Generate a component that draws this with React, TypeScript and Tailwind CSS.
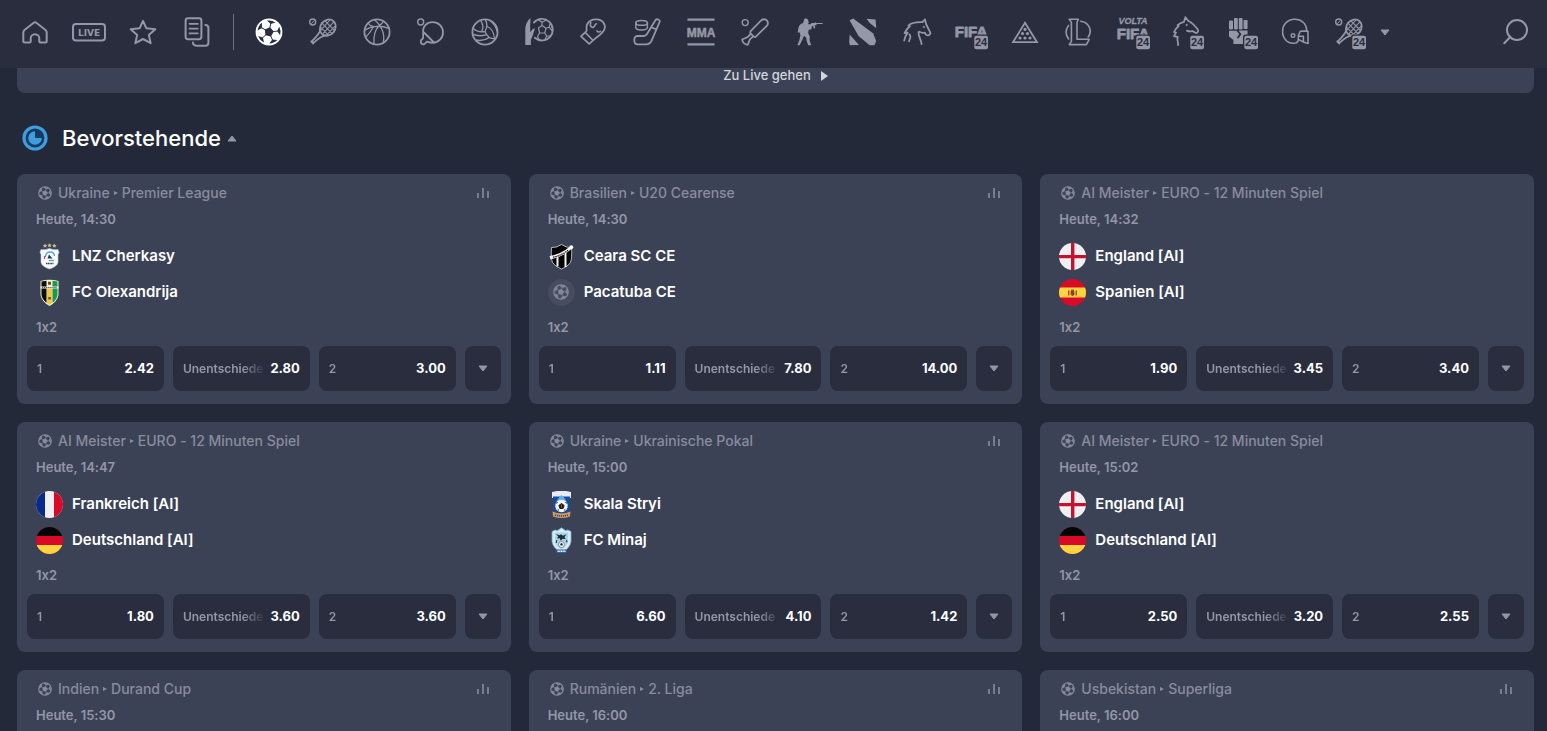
import type { ReactNode } from 'react'

const LOGO_FONT = "'Liberation Sans', Arial, sans-serif"

function Icon({ children }: { children: ReactNode }) {
  return (
    <svg viewBox="0 0 36 36" className="h-9 w-9" fill="none" stroke="currentColor" strokeWidth="1.8" strokeLinecap="round" strokeLinejoin="round" aria-hidden="true">
      {children}
    </svg>
  )
}

/* Small "24" plate used by the simulated sports */
function Badge24() {
  return (
    <g stroke="none">
      <rect x="20" y="20.5" width="16" height="15.5" rx="2.5" fill="#292d3d" />
      <rect x="21.3" y="21.7" width="13.7" height="13.5" rx="2" fill="currentColor" />
      <text x="28.1" y="32.4" textAnchor="middle" fontSize="11" fontWeight="700" fontFamily={LOGO_FONT} fill="#292d3d">24</text>
    </g>
  )
}

function BallPatches() {
  return (
    <>
      <path d="M18 13.2 22.6 16.5 20.8 21.9H15.2L13.4 16.5Z" />
      {[0, 72, 144, 216, 288].map((angle) => (
        <path key={angle} transform={`rotate(${angle} 18 18)`} d="M13.6 7.3Q18 5.6 22.4 7.3L18 9.8Z" />
      ))}
    </>
  )
}

function BallSeams() {
  return (
    <>
      {[0, 72, 144, 216, 288].map((angle) => (
        <path key={angle} transform={`rotate(${angle} 18 18)`} d="M18 13.4V9.5" />
      ))}
    </>
  )
}

function SmallBall({ className }: { className: string }) {
  return (
    <svg viewBox="4 4 28 28" className={className} fill="none" stroke="currentColor" aria-hidden="true">
      <circle cx="18" cy="18" r="12.6" strokeWidth="2.2" />
      <g transform="rotate(14 18 18)">
        <g strokeWidth="1"><BallSeams /></g>
        <g fill="currentColor" strokeWidth="1.4"><BallPatches /></g>
      </g>
    </svg>
  )
}

function Racket() {
  return (
    <>
      <circle cx="7.7" cy="8" r="3" strokeWidth="1.4" />
      <path d="M6.6 9.5 9 6.6" strokeWidth="1" />
      <ellipse cx="22.8" cy="13.6" rx="7.4" ry="8.6" transform="rotate(40 22.8 13.6)" />
      <path d="M20 6.9 29 16M17 9.2l9.6 9.9M15.3 12.8l8 8.3M25 6l-8.8 9.6M28.6 8.2 18.2 19.3M30 12.2l-8.4 9" strokeWidth="1.1" />
      <path d="M15.5 15.8C14.6 19.4 11.8 22.5 7 27.2l1.6 1.7C13 24.6 17 21.7 20.8 21.3M6.2 27.4l2 2.2" />
    </>
  )
}

function FootballIcon() {
  return (
    <Icon>
      <circle cx="18" cy="18" r="13.4" fill="currentColor" stroke="none" />
      <g fill="#292d3d" stroke="none" transform="rotate(12 18 18)"><BallPatches /></g>
      <g stroke="#292d3d" strokeWidth="0.9" transform="rotate(12 18 18)"><BallSeams /></g>
    </Icon>
  )
}

const menuIcons: { label: string; icon: ReactNode }[] = [
  {
    label: 'Startseite',
    icon: <Icon><path strokeWidth="2" d="M7.5 16 16.7 8.8Q18 7.8 19.3 8.8L28.5 16Q29.7 17 29.7 18.5V27Q29.7 28.5 28.2 28.5H23.3Q22.3 28.5 22.3 27.5V24.5A4.3 4.3 0 0 0 13.7 24.5V27.5Q13.7 28.5 12.7 28.5H7.8Q6.3 28.5 6.3 27V18.5Q6.3 17 7.5 16Z" /></Icon>,
  },
  {
    label: 'Live',
    icon: (
      <Icon>
        <rect x="2" y="10" width="32" height="16.5" rx="3" strokeWidth="2" />
        <text x="18" y="21.6" textAnchor="middle" fontSize="9" fontWeight="700" fontFamily="'DejaVu Sans', sans-serif" fill="currentColor" stroke="none">LIVE</text>
      </Icon>
    ),
  },
  {
    label: 'Favoriten',
    icon: <Icon><path strokeWidth="2" d="M18 6.8 21.4 14.3 30.3 15.2 23.8 20.9 25.7 29.2 18 25 10.3 29.2 12.2 20.9 5.7 15.2 14.6 14.3Z" /></Icon>,
  },
  {
    label: 'Wettscheine',
    icon: (
      <Icon>
        <path strokeWidth="2" d="M9 4.3H20Q22.4 4.3 22.4 6.7V22.8Q22.4 25.2 20 25.2H9Q6.6 25.2 6.6 22.8V6.7Q6.6 4.3 9 4.3ZM26.4 11Q29.4 11 29.4 14V28.7Q29.4 31.7 26.4 31.7H17.2Q14 31.7 14 28.6" />
        <path strokeWidth="1.8" d="M10.5 9.8H18.8M10.5 14.6H18.8M10.5 19.4H18.8" />
      </Icon>
    ),
  },
]

const sportIcons: { label: string; icon: ReactNode }[] = [
  { label: 'Fußball', icon: <FootballIcon /> },
  { label: 'Tennis', icon: <Icon><Racket /></Icon> },
  {
    label: 'Basketball',
    icon: (
      <Icon>
        <circle cx="18" cy="18" r="12.6" />
        <path strokeWidth="1.3" d="M5.8 16.5C12 11.5 22 11 30.2 14.6M9 9C11 12.5 16 13.5 20 11.8C22.5 10.5 23.8 8.5 24.4 7.2M15.2 5.8C19 8.5 21.5 12 23.4 16.5C25 20.5 25 25 24.4 28.6M20 11.8C16 16 14.5 23 15 30M6.6 23.4C10.5 19.5 13.5 14.5 14.5 12.9" />
      </Icon>
    ),
  },
  {
    label: 'Tischtennis',
    icon: (
      <Icon>
        <circle cx="7.7" cy="8" r="3" strokeWidth="1.4" />
        <path d="M10.2 18.4C9.4 11.8 14.2 8.2 19.8 8.2C25.6 8.2 30 12.8 30 18.4C30 24 25.4 28.8 19.8 28.8C17 28.8 15.5 28.2 14 27.6C13 27.8 12.8 29.8 11 30.3C8.7 30.8 7.2 28.6 8 26.6C8.8 25 10.6 25 10.2 22.6C9.9 21.2 10.3 20 10.2 18.4ZM11 18.5 21 28.5" />
      </Icon>
    ),
  },
  {
    label: 'Volleyball',
    icon: (
      <Icon>
        <circle cx="18" cy="18" r="12.6" />
        <path strokeWidth="1.3" d="M18 17.5C13.2 18.3 9 17.2 6 14.2M18 17.5C20.5 13 20.5 9 18 5.4M18 17.5C20 22.5 24 25.2 28.6 24.9M14.4 17.8C17 13.5 16.2 10 13.5 6.4M20.2 12.5C24 13.8 27 17.5 27.5 25M22.8 6.5C26.5 9 29 13 30.3 18M19.6 20.6C14 22.4 9.5 22 5.8 20.2M22.4 23.4C18 26.5 13 27 8.5 26" />
      </Icon>
    ),
  },
  {
    label: 'Handball',
    icon: (
      <Icon>
        <path fill="currentColor" stroke="none" d="M4.3 31V15.5C4.3 11 6.4 6.5 9.2 4.2C9.9 5.2 9.2 9 9.2 12V18.2C10.4 16.6 11.5 14.9 13 14.4C14 14.2 13.8 15.2 13.3 16.5C12.3 19.6 11.7 22.3 10.4 24.5C9.7 25.7 9.9 28 9.9 31Z" />
        <path d="M12.8 8.6A10.8 10.8 0 1 1 13.8 23.8" />
        <path strokeWidth="1.2" d="M17.5 14 21 11.5 25 14.3 23.7 19H18.6ZM21 11.5V8.3L17.6 6M21 8.3 25 6.2M25 14.3 28.2 13.2 29 9.8M28.2 13.2 31 16.5M23.7 19 25.7 22 29.6 22M25.7 22 23.8 26M18.6 19 16.6 22.3 18.2 26" />
      </Icon>
    ),
  },
  {
    label: 'Boxen',
    icon: (
      <Icon>
        <path d="M6 22.3 11.2 17.4C12.4 16.2 10.6 13.8 12 10.6C13.6 7 18 5.2 22 5.4C27.5 5.8 30.8 10.2 29.6 14.8C28.4 19 24 21.8 20.4 24.3L14.2 29.8Z" />
        <path d="M15.8 8.2C14.6 11.8 16 13.6 18 13.4C20 13 19.4 10.2 21.4 9.8M10.4 18.6 17.6 26M22 16.8C22.6 18 24 18.4 25.5 17.4" strokeWidth="1.6" />
      </Icon>
    ),
  },
  {
    label: 'Eishockey',
    icon: (
      <Icon>
        <ellipse cx="12.6" cy="8.9" rx="5.8" ry="2.4" strokeWidth="1.5" />
        <path strokeWidth="1.5" d="M6.8 9V13.5C6.8 16.8 18.4 16.8 18.4 13.5V9" />
        <path d="M26.4 6.2C27.6 4.2 31.5 5.8 30.6 8L22.6 26.6C21.6 29 20 30.3 17 30.3H8.4C4.4 30.3 4.2 22 8.2 22H14.6C16.2 22 17.2 21.4 18 20ZM22.6 13.5 27.6 15.4" />
      </Icon>
    ),
  },
  {
    label: 'MMA',
    icon: (
      <Icon>
        <path strokeLinecap="butt" strokeWidth="2.2" d="M4.5 5.6H31.5M4.5 30.4H31.5" />
        <text x="18" y="22.6" textAnchor="middle" fontSize="12" fontWeight="700" fontFamily={LOGO_FONT} fill="currentColor" strokeWidth="0.5">MMA</text>
      </Icon>
    ),
  },
  {
    label: 'Cricket',
    icon: (
      <Icon>
        <circle cx="8.2" cy="8.6" r="3" strokeWidth="1.4" />
        <path d="M13.6 19.4C12.8 18.6 13.4 17.4 14.2 16.6L24.4 6.2C25.8 4.8 28.5 5 29.8 6.4C31.3 8 31.3 10.4 29.8 11.8L19.4 22.2C18.4 23.2 17.6 23.6 16.6 22.6ZM13.8 19.6 11.4 22.4C9.8 24 7.2 24.4 5.2 25.4C5.4 28.4 7.8 30.6 10.6 30.8C12 28.8 11.6 26.6 13.6 24.6L16.4 22.4" />
      </Icon>
    ),
  },
  {
    label: 'Counter-Strike',
    icon: (
      <Icon>
        <path fill="currentColor" stroke="none" d="M13.4 4.8C15 4.2 17 4.8 17.2 6.4L17.8 8.4 16.8 10.2H19.6L20.6 9H24.2V8.2H25V9H31.8V10H25.5V11.2H23.6L24.4 14.2H22.8L22 12 20.6 12.6V15.2L17.6 15.8 17.2 19.2 18.8 22.4 18.6 26.2 20 30.4V31.3H17.2L15.6 26.8 15.2 23.8 13 21.8 11 26.4 8.6 31.3H6.4L6.8 30 8.2 26.4 9.4 21.4 8.8 18.6 6.6 18.4 7.6 13.2C8.2 10.8 10 9.4 12 9.2Z" />
      </Icon>
    ),
  },
  {
    label: 'Dota 2',
    icon: (
      <Icon>
        <g fill="currentColor" stroke="none">
          <path d="M4.6 6.2 8.2 4.6 28 19.2 31.2 27 29.4 31.3H24.6L13.5 22Z" />
          <path d="M21.6 4.8 30.6 5.6 31.2 14.2 24.4 8.8Z" />
          <path d="M4.6 20.6 14 31 5 31.3 4.2 29Z" />
        </g>
      </Icon>
    ),
  },
  {
    label: 'Pferderennen',
    icon: (
      <Icon>
        <path d="M5.2 26.6C5.8 23 7 20.8 8.6 18.6L5.6 19.2C7 15.6 9.2 13.6 11 12L9.4 11.6C12.6 8.4 17.8 8 23.4 8.2L26 5.4 27 10 31.2 18.4C32 20.6 29 22.4 27 20.6L25.6 18.6C23.6 19.2 22 18.8 20.4 17.6M19.6 18.2C19 22 22 25 22.6 30.2M10.4 20.4C12.6 22 11 24.4 10 27.2" />
        <circle cx="24.8" cy="13" r="0.7" fill="currentColor" strokeWidth="0.6" />
      </Icon>
    ),
  },
  {
    label: 'FIFA 24',
    icon: (
      <Icon>
        <text x="18" y="22.6" textAnchor="middle" fontSize="15" fontWeight="700" fontFamily={LOGO_FONT} fill="currentColor" strokeWidth="0.8">FIFA</text>
        <Badge24 />
      </Icon>
    ),
  },
  {
    label: 'Billard',
    icon: (
      <Icon>
        <path strokeLinejoin="miter" d="M18 8.8 30 28.2H6Z" />
        <g fill="currentColor" stroke="none">
          <circle cx="18" cy="15.4" r="1.6" />
          <circle cx="15.5" cy="19.6" r="1.6" />
          <circle cx="20.5" cy="19.6" r="1.6" />
          <circle cx="13" cy="24" r="1.6" />
          <circle cx="18" cy="24" r="1.6" />
          <circle cx="23" cy="24" r="1.6" />
        </g>
      </Icon>
    ),
  },
  {
    label: 'League of Legends',
    icon: (
      <Icon>
        <path strokeWidth="1.6" d="M8.2 5.3H17.4L16 8V25.3H28.2L25.4 30.6H8.2L10.4 27.4V8.4Z" />
        <path strokeWidth="1.6" d="M19.6 7.2C28.4 8.2 31.6 17 27.2 23M7.6 11.4C4.4 15.5 4.4 20.5 7.6 25" />
      </Icon>
    ),
  },
  {
    label: 'Volta FIFA 24',
    icon: (
      <Icon>
        <text x="18" y="10.4" textAnchor="middle" fontSize="9" fontWeight="700" fontStyle="italic" fontFamily={LOGO_FONT} fill="currentColor" strokeWidth="0.3">VOLTA</text>
        <text x="18" y="24.6" textAnchor="middle" fontSize="15" fontWeight="700" fontFamily={LOGO_FONT} fill="currentColor" strokeWidth="0.8">FIFA</text>
        <Badge24 />
      </Icon>
    ),
  },
  {
    label: 'Pferderennen 24',
    icon: (
      <Icon>
        <path d="M9 31.2C9.6 28 7.4 26.4 8.8 23L5 22.2 7 18.6 5 18C6.2 15 8 13.4 9.6 12L8.6 11.2C10.4 9.4 12.6 8.4 15 7.8L16.4 3.2 19.4 7C23 8.4 25.8 11.4 28.8 15.6C30 17.4 28 19.8 26.2 18.6L23.4 17C21.4 17.8 19.8 17.6 18 16.6" />
        <circle cx="17.6" cy="11" r="0.7" fill="currentColor" strokeWidth="0.6" />
        <Badge24 />
      </Icon>
    ),
  },
  {
    label: 'Kampf 24',
    icon: (
      <Icon>
        <g fill="currentColor" stroke="none">
          <rect x="6" y="6.4" width="4" height="9" rx="0.8" />
          <rect x="11" y="4" width="3.8" height="11.4" rx="0.8" />
          <rect x="15.8" y="4" width="3.8" height="11.4" rx="0.8" />
          <rect x="20.6" y="6" width="4" height="9" rx="0.8" />
          <path d="M6 16.8H13.4L16.2 20 13.8 24 15.4 24.6 18.4 20.2 15.6 16.6H24.6V22L21.6 25.4V30H10.4V26L6 22.4Z" />
        </g>
        <Badge24 />
      </Icon>
    ),
  },
  {
    label: 'American Football',
    icon: (
      <Icon>
        <path strokeWidth="1.6" d="M29.8 16.8C29.4 9.6 24.4 5 17.6 5.2C10.4 5.4 5.2 11 5.6 18C5.7 22 7.6 25 9.6 27C12 29 16 29.6 18.8 29C20.8 28.5 21.4 26.5 21.4 24.5V21.5L23.4 17.2ZM21.4 22.2H26.4V28M23.4 17.2H31V29.4L26.4 28L21.4 25.4" />
        <circle cx="16" cy="21.6" r="1.8" strokeWidth="1.4" />
      </Icon>
    ),
  },
  { label: 'Tennis 24', icon: <Icon><Racket /><Badge24 /></Icon> },
]

/* ---------- team crests ---------- */

function Flag({ children }: { children: ReactNode }) {
  return (
    <span className="block h-[27px] w-[27px] overflow-hidden rounded-full">
      <svg viewBox="0 0 27 27" className="h-full w-full" aria-hidden="true">{children}</svg>
    </span>
  )
}

function Crest({ children }: { children: ReactNode }) {
  return <svg viewBox="0 0 27 27" className="h-[27px] w-[27px]" aria-hidden="true">{children}</svg>
}

const england = (
  <Flag>
    <rect width="27" height="27" fill="#f0f0f2" />
    <path d="M12 0h3.4v27H12zM0 12h27v3.2H0z" fill="#c8102e" />
  </Flag>
)

const spain = (
  <Flag>
    <rect width="27" height="27" fill="#d80a27" />
    <rect y="8.5" width="27" height="10" fill="#ffd43f" />
    <path d="M9 11.5h1.4v5H9zM16.6 11.5H18v5h-1.4zM11.5 12.2l1-1.7h2l1 1.7v3.6l-2 1.4-2-1.4z" fill="#a5502d" />
    <path d="M12.5 12.4h1v1.6h-1zM13.6 14h1.2v1.4h-1.2z" fill="#4c2c24" />
  </Flag>
)

const france = (
  <Flag>
    <rect width="27" height="27" fill="#f0f0f2" />
    <rect width="9" height="27" fill="#062b8c" />
    <rect x="18" width="9" height="27" fill="#d80a27" />
  </Flag>
)

const germany = (
  <Flag>
    <rect width="27" height="27" fill="#d80a27" />
    <rect width="27" height="9" fill="#050505" />
    <rect y="18" width="27" height="9" fill="#ffd43f" />
  </Flag>
)

const cherkasy = (
  <Crest>
    <path d="M9 .6l.8 1.4 1.5.1-1.1 1 .3 1.5L9 3.9l-1.4.7.3-1.5-1.1-1L8.2 2zM13.5.2l.8 1.4 1.5.1-1.1 1 .3 1.5-1.5-.7-1.4.7.3-1.5-1.1-1 1.4-.1zM18.3.6l.8 1.4 1.5.1-1.1 1 .3 1.5-1.5-.7-1.4.7.3-1.5-1.1-1 1.4-.1z" fill="#c9bd96" />
    <path d="M5 6.5q4 .8 8.5-1 4.5 1.8 8.5 1l1 3-1 2v8q-1 4-8.5 6.5Q6 23.5 5 19.5v-8l-1-2z" fill="#f7f9fc" stroke="#b8c6d8" strokeWidth=".6" />
    <path d="M9.5 14q0-5 5-5 3.5 0 4 4" fill="none" stroke="#5aa7dc" strokeWidth="1.4" />
    <path d="M8.5 13v3" stroke="#d83a6a" strokeWidth="1.2" />
    <path d="M11.5 15.5l1.5-4 3.5 4z" fill="#173a63" />
    <path d="M13 17.5h5" stroke="#4caf6f" strokeWidth="1.2" />
    <path d="M10 20.5h7.5" stroke="#40444c" strokeWidth="1.6" strokeDasharray="1.3 .4" />
  </Crest>
)

const olexandrija = (
  <Crest>
    <path d="M4.5 2q9-2.5 18 0v14q-1 6.5-9 11-8-4.5-9-11z" fill="#f3efd2" />
    <path d="M5.5 2.6l5-.8v22q-4.5-3.3-5-8z" fill="#0c0d0d" />
    <path d="M16.5 1.8l5 .8v13.2q-.5 4.7-5 8z" fill="#169a4c" />
    <path d="M11 9h5v15l-2.5 2L11 24z" fill="#f2c744" />
    <path d="M4.5 7.5h18v2h-18z" fill="#e9ebe6" />
    <path d="M6 8.5h15" stroke="#33372f" strokeWidth=".8" strokeDasharray="1.2 .7" />
    <path d="M12 2.8h3v3h-3zM12.3 18h2.5v2.5h-2.5z" fill="#6b4b1d" />
  </Crest>
)

const ceara = (
  <Crest>
    <path d="M3.5 4.5q5 .5 10-3 5 3.5 10 3 .8 10-1 15-2.500 4-9 6.500-6.500-2.500-9-6.500-1.800-5-1-15z" fill="#050506" stroke="#d8d9dd" strokeWidth=".8" />
    <path d="M9.5 13.5v10M17.5 10v14" stroke="#f4f4f4" strokeWidth="2" />
    <path d="M1.5 13q12-2 21-10l1.5 2.5Q15 14 2.5 16.5z" fill="#f4f4f4" />
    <path d="M5 14.2q9-1.7 15-7" fill="none" stroke="#111" strokeWidth="1.2" strokeDasharray="1.5 .7" />
    <circle cx="23.3" cy="4.2" r="1.9" fill="#fff" />
  </Crest>
)

const skala = (
  <Crest>
    <path d="M4 1q9.5-2.5 19 0v6H4z" fill="#eceaf1" />
    <path d="M5 5.5h17v14q-8 5-17 0z" fill="#174c9c" />
    <path d="M13.5 4q5 4 5.5 10H8q.5-6 5.5-10z" fill="#57b2e5" />
    <circle cx="13.5" cy="15" r="6.2" fill="#f5f5f6" />
    <path d="M13.5 12.5l2.6 1.9-1 3.1h-3.2l-1-3.1zM8.5 12.5l1-1.5M18.5 12.5l-1-1.5M9.5 19h1.5M16 19h1.5" fill="#191d24" stroke="#191d24" strokeWidth="1" />
    <path d="M13 13.5h1v3h-1z" fill="#c0392b" />
    <path d="M4.5 20.5q9 4 18 0l-.5 5q-8.5 3-17 0z" fill="#c99b72" />
    <path d="M7 24q6.500 2 13 0" fill="none" stroke="#5b4333" strokeWidth="1.5" strokeDasharray="1.2 .8" />
  </Crest>
)

const minaj = (
  <Crest>
    <path d="M4 4.5l3-1.5 2.5.6L13.5.8l4 2.8L20 3l3 1.5v10q-1 7-9.5 11Q5 21.5 4 14.5z" fill="#d8ebf5" stroke="#6eacd2" strokeWidth=".8" />
    <path d="M7 5.5h13v9q-1 4.5-6.5 8Q8 19 7 14.5z" fill="#a9d3ea" />
    <path d="M8 7l3.5 1.2 1.5-1 1.8 1.6 3.7-1.5-2 2.7 1.2 2.2-3-.5-2 2-1-2.5-2.7.3 1.2-2z" fill="#222b33" />
    <path d="M9 13l-1 3M18.5 13l.5 2.5" stroke="#222b33" strokeWidth="1" />
    <circle cx="13.5" cy="17.5" r="3" fill="#f4f7f9" stroke="#4b5660" strokeWidth=".6" />
    <path d="M13.5 16l1.4 1-.5 1.6h-1.8l-.5-1.6z" fill="#222b33" />
    <path d="M8.5 22.5h10v3.5h-10z" fill="#2a64a6" />
    <path d="M9.5 24.3h8" stroke="#fff" strokeWidth="1.5" strokeDasharray="1.2 .5" />
  </Crest>
)

const noCrest = (
  <span className="flex h-[27px] w-[27px] items-center justify-center rounded-full bg-[#474c5e] text-[#82879a]">
    <SmallBall className="h-4 w-4" />
  </span>
)

/* ---------- matches ---------- */

type Match = {
  country: string
  league: string
  time: string
  stats?: boolean
  teams?: { name: string; crest: ReactNode }[]
  odds?: [string, string, string]
}

const matches: Match[] = [
  { country: 'Ukraine', league: 'Premier League', time: 'Heute, 14:30', stats: true, teams: [{ name: 'LNZ Cherkasy', crest: cherkasy }, { name: 'FC Olexandrija', crest: olexandrija }], odds: ['2.42', '2.80', '3.00'] },
  { country: 'Brasilien', league: 'U20 Cearense', time: 'Heute, 14:30', stats: true, teams: [{ name: 'Ceara SC CE', crest: ceara }, { name: 'Pacatuba CE', crest: noCrest }], odds: ['1.11', '7.80', '14.00'] },
  { country: 'AI Meister', league: 'EURO - 12 Minuten Spiel', time: 'Heute, 14:32', teams: [{ name: 'England [AI]', crest: england }, { name: 'Spanien [AI]', crest: spain }], odds: ['1.90', '3.45', '3.40'] },
  { country: 'AI Meister', league: 'EURO - 12 Minuten Spiel', time: 'Heute, 14:47', teams: [{ name: 'Frankreich [AI]', crest: france }, { name: 'Deutschland [AI]', crest: germany }], odds: ['1.80', '3.60', '3.60'] },
  { country: 'Ukraine', league: 'Ukrainische Pokal', time: 'Heute, 15:00', stats: true, teams: [{ name: 'Skala Stryi', crest: skala }, { name: 'FC Minaj', crest: minaj }], odds: ['6.60', '4.10', '1.42'] },
  { country: 'AI Meister', league: 'EURO - 12 Minuten Spiel', time: 'Heute, 15:02', teams: [{ name: 'England [AI]', crest: england }, { name: 'Deutschland [AI]', crest: germany }], odds: ['2.50', '3.20', '2.55'] },
  { country: 'Indien', league: 'Durand Cup', time: 'Heute, 15:30', stats: true },
  { country: 'Rumänien', league: '2. Liga', time: 'Heute, 16:00', stats: true },
  { country: 'Usbekistan', league: 'Superliga', time: 'Heute, 16:00', stats: true },
]

const outcomes = ['1', 'Unentschiede', '2']

function Caret({ className }: { className: string }) {
  return (
    <svg viewBox="0 0 10 7" className={className} fill="currentColor" stroke="currentColor" strokeLinejoin="round" aria-hidden="true">
      <path d="M1 1h8L5 6z" />
    </svg>
  )
}

function MatchCard({ match }: { match: Match }) {
  return (
    <article className="min-h-[230px] rounded-lg bg-[#3c4256] px-[10px] pt-[5px] pb-[13px]">
      <div className="flex h-[27px] items-center px-[11px] text-sm font-medium text-[#888c9d]">
        <SmallBall className="mr-[6px] h-[14px] w-[14px]" />
        <span>{match.country}</span>
        <svg viewBox="0 0 4 4" className="mx-1 h-1 w-1" fill="currentColor" aria-hidden="true"><path d="M0 0l4 2-4 2z" /></svg>
        <span>{match.league}</span>
        {match.stats && (
          <button aria-label="Statistik" className="ml-auto text-[#777c8e]">
            <svg viewBox="0 0 14 12" className="h-3 w-[14px]" stroke="currentColor" strokeWidth="2" aria-hidden="true">
              <path d="M2 6v5M7 1v10M12 4v7" />
            </svg>
          </button>
        )}
      </div>
      <div className="flex h-[27px] items-center px-[9px] text-[13px] font-semibold text-[#9296a6]">{match.time}</div>

      {match.teams && (
        <div className="mt-[5px] px-[9px]">
          {match.teams.map((team) => (
            <div key={team.name} className="flex h-9 items-center gap-[9px] text-[15px] font-semibold text-white">
              {team.crest}
              <span>{team.name}</span>
            </div>
          ))}
        </div>
      )}

      {match.odds && (
        <>
          <div className="flex h-9 items-center px-[9px] text-[13px] font-semibold text-[#9296a6]">1x2</div>
          <div className="flex gap-[9px]">
            {match.odds.map((odd, i) => (
              <button key={outcomes[i]} className="flex h-[45px] min-w-0 flex-1 items-center gap-1 rounded-lg bg-[#292d3d] px-[10px] text-[13px]">
                <span className="min-w-0 flex-1 overflow-hidden text-left text-xs font-semibold whitespace-nowrap text-[#9296a6] [mask-image:linear-gradient(to_right,black_calc(100%_-_24px),transparent)]">
                  {outcomes[i]}
                </span>
                <span className="font-bold text-white">{odd}</span>
              </button>
            ))}
            <button aria-label="Weitere Wetten" className="flex h-[45px] w-9 items-center justify-center rounded-lg bg-[#292d3d] text-[#9296a6]">
              <Caret className="h-[7px] w-[10px]" />
            </button>
          </div>
        </>
      )}
    </article>
  )
}

export default function App() {
  return (
    <div className="flex h-screen flex-col overflow-hidden bg-[#232938] font-['Inter','Open_Sans',sans-serif] [font-feature-settings:'calt'_0]">
      {/* Sport navigation */}
      <header className="flex h-[68px] shrink-0 items-center bg-[#292d3d] pr-[5px] pb-1 pl-2 text-[#9497a5]">
        <nav aria-label="Hauptmenü" className="flex">
          {menuIcons.map((item) => (
            <button key={item.label} aria-label={item.label} className="flex w-[54px] justify-center">{item.icon}</button>
          ))}
        </nav>
        <div className="mr-2 ml-[9px] h-9 w-px bg-[#6d7180]" />
        <nav aria-label="Sportarten" className="flex items-center">
          {sportIcons.map((item, i) => (
            <button key={item.label} aria-label={item.label} className={i === 0 ? 'flex w-[54px] justify-center text-white' : 'flex w-[54px] justify-center'}>
              {item.icon}
            </button>
          ))}
          <button aria-label="Mehr Sportarten" className="flex w-[18px] justify-center">
            <Caret className="h-[7px] w-[10px]" />
          </button>
        </nav>
        <button aria-label="Suche" className="ml-auto flex w-[54px] justify-center">
          <Icon><path strokeWidth="2" d="M13.4 22.8 7.3 29.2M30 16A10 10 0 1 1 10 16A10 10 0 1 1 30 16Z" /></Icon>
        </button>
      </header>

      <main className="flex-1 overflow-y-auto pr-[13px] pl-[17px] [scrollbar-width:none]">
        <a href="#live" className="flex h-[25px] items-center justify-center gap-[10px] rounded-b-lg bg-[#3c4256] pb-[10px] text-[13px] leading-[15px] font-medium text-[#d3d5dc]">
          Zu Live gehen
          <svg viewBox="0 0 7 10" className="h-[10px] w-[7px]" fill="currentColor" aria-hidden="true"><path d="M0 0l7 5-7 5z" /></svg>
        </a>

        {/* Upcoming matches */}
        <h2 className="h-[81px] pt-[9px] pl-[5px]">
          <button aria-expanded="true" className="flex h-full items-center text-[22px] font-medium text-white">
            <svg viewBox="0 0 26 26" className="mr-[14px] h-[26px] w-[26px]" aria-hidden="true">
              <circle cx="13" cy="13" r="11" fill="#17395d" stroke="#3d9fe0" strokeWidth="3.2" />
              <path d="M13 6.2A6.8 6.8 0 1 0 19.8 13H14Q13 13 13 12Z" fill="#3d9fe0" />
            </svg>
            Bevorstehende
            <Caret className="ml-[6px] h-[7px] w-[10px] rotate-180 text-[#9296a6]" />
          </button>
        </h2>

        <section aria-label="Bevorstehende Spiele" className="grid grid-cols-3 gap-[18px]">
          {matches.map((match, i) => (
            <MatchCard key={i} match={match} />
          ))}
        </section>
      </main>
    </div>
  )
}
